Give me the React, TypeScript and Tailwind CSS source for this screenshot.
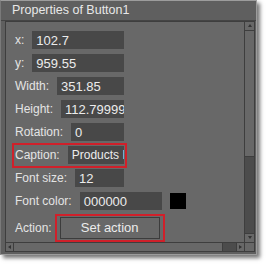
const font = { fontFamily: '"Liberation Sans", Arial, sans-serif' };

function Field({ label, value, w }: { label: string; value: string; w?: string }) {
  return (
    <div className="flex h-[23px] items-center gap-[8px]">
      <span className="shrink-0 text-[12px] text-[#e4e4e4]">{label}</span>
      <div
        className={`flex h-[18px] min-w-0 items-center overflow-hidden whitespace-nowrap bg-[#484848] pl-[4px] text-[13px] text-[#ececec] ${w ?? "flex-1"}`}
      >
        {value}
      </div>
    </div>
  );
}

export default function App() {
  return (
    <div className="h-[269px] w-[269px] bg-white" style={font}>
      <div className="flex h-[255px] w-[257px] flex-col border border-[#9c9c9c] border-l-[#7a7a7a] bg-[#5f5f5f] shadow-[3px_3px_4px_rgba(0,0,0,0.55)]">
        <div className="flex h-[23px] items-center border-b border-[#444] pl-[11px] text-[12.5px] text-[#e8e8e8]">
          Properties of Button1
        </div>
        <div className="mb-[3px] ml-[4px] mr-[1px] flex flex-1 flex-col border border-[#3e3e3e] bg-[#686868]">
          <div className="flex flex-1">
            <div className="flex w-[239px] flex-col pl-[9px] pt-[7px]">
              <div className="w-[109px]">
                <Field label="x:" value="102.7" />
                <Field label="y:" value="959.55" />
                <Field label="Width:" value="351.85" />
                <Field label="Height:" value="112.79999" />
                <Field label="Rotation:" value="0" />
              </div>
              <div className="-my-px ml-[-3px] flex h-[25px] w-[115px] items-center border-2 border-[#d0202a] pl-px pr-[1px]">
                <div className="flex min-w-0 flex-1 items-center gap-[8px]">
                  <span className="shrink-0 text-[12px] text-[#e4e4e4]">Caption:</span>
                  <div className="flex h-[18px] min-w-0 flex-1 items-center overflow-hidden whitespace-nowrap bg-[#484848] pl-[4px] text-[12px] text-[#ececec]">
                    Products Page
                  </div>
                </div>
              </div>
              <div className="w-[109px]">
                <Field label="Font size:" value="12" />
              </div>
              <div className="flex items-center gap-[8px]">
                <div className="w-[147px]">
                  <Field label="Font color:" value="000000" />
                </div>
                <div className="h-[16px] w-[16px] bg-black" />
              </div>
              <div className="mt-[1px] flex h-[28px] items-center">
                <span className="text-[12px] text-[#e4e4e4]">Action:</span>
                <div className="ml-[3px] flex h-[28px] w-[110px] items-center justify-center border-2 border-[#d0202a]">
                  <div className="flex h-[22px] w-[100px] items-center justify-center border border-[#3c3c3c] text-[13px] text-[#ececec]">
                    Set action
                  </div>
                </div>
              </div>
            </div>
            <div className="flex w-[10px] flex-col border-l border-[#3e3e3e]">
              <div className="flex h-[9px] items-center justify-center border-b border-[#3e3e3e]">
                <div className="h-0 w-0 border-x-[2px] border-b-[3px] border-x-transparent border-b-[#333]" />
              </div>
              <div className="h-[126px] border-b border-[#3e3e3e]" />
              <div className="flex-1 bg-[#4c4c4c]" />
              <div className="flex h-[9px] items-center justify-center border-t border-[#3e3e3e]">
                <div className="h-0 w-0 border-x-[2px] border-t-[3px] border-x-transparent border-t-[#333]" />
              </div>
            </div>
          </div>
          <div className="flex h-[9px] border-t border-[#3e3e3e]">
            <div className="flex w-[8px] items-center justify-center border-r border-[#3e3e3e]">
              <div className="h-0 w-0 border-y-[2px] border-r-[3px] border-y-transparent border-r-[#333]" />
            </div>
            <div className="w-[209px] border-r border-[#3e3e3e]" />
            <div className="w-[13px] bg-[#4c4c4c]" />
            <div className="flex w-[9px] items-center justify-center border-x border-[#3e3e3e]">
              <div className="h-0 w-0 border-y-[2px] border-l-[3px] border-y-transparent border-l-[#333]" />
            </div>
            <div className="flex-1" />
          </div>
        </div>
      </div>
    </div>
  );
}
